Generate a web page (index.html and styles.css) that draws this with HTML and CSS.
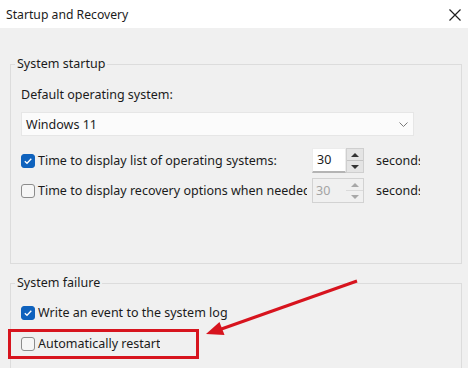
FILE: index.html
```html
<!DOCTYPE html>
<html lang="en">
<head>
<meta charset="utf-8">
<title>Startup and Recovery</title>
<link rel="stylesheet" href="styles.css">
</head>
<body>
<div class="window">
  <div class="titlebar">
    <span class="title">Startup and Recovery</span>
    <svg class="close" width="12" height="12" viewBox="0 0 12 12"><path d="M0.5 0.5 L11.5 11.5 M11.5 0.5 L0.5 11.5" stroke="#1f1f1f" stroke-width="1.2" fill="none"/></svg>
  </div>
  <div class="content">
    <fieldset class="group startup">
      <legend>System startup</legend>
      <div class="field-label">Default operating system:</div>
      <div class="combo">
        <span>Windows 11</span>
        <svg class="chevron" width="9" height="5" viewBox="0 0 9 5"><path d="M0.5 0.5 L4.5 4.5 L8.5 0.5" stroke="#7a7a7a" stroke-width="1" fill="none"/></svg>
      </div>
      <div class="row row-first">
        <div class="check-item">
          <span class="cb checked"><svg width="10" height="10" viewBox="0 0 10 10"><path d="M1.8 5.2 L4 7.3 L8.3 2.8" stroke="#fff" stroke-width="1.3" fill="none"/></svg></span>
          <span class="check-text">Time to display list of operating systems:</span>
        </div>
        <div class="spin">
          <span class="spin-value">30</span>
          <span class="spin-buttons">
            <span class="arrow up"></span>
            <span class="arrow down"></span>
          </span>
        </div>
        <span class="unit">seconds</span>
      </div>
      <div class="row row-second">
        <div class="check-item">
          <span class="cb"></span>
          <span class="check-text">Time to display recovery options when needed</span>
        </div>
        <div class="spin disabled">
          <span class="spin-value">30</span>
          <span class="spin-buttons">
            <span class="arrow up"></span>
            <span class="arrow down"></span>
          </span>
        </div>
        <span class="unit">seconds</span>
      </div>
    </fieldset>
    <fieldset class="group failure">
      <legend>System failure</legend>
      <div class="row row-check">
        <div class="check-item">
          <span class="cb checked"><svg width="10" height="10" viewBox="0 0 10 10"><path d="M1.8 5.2 L4 7.3 L8.3 2.8" stroke="#fff" stroke-width="1.3" fill="none"/></svg></span>
          <span class="check-text">Write an event to the system log</span>
        </div>
      </div>
      <div class="row row-check row-restart">
        <div class="check-item">
          <span class="cb"></span>
          <span class="check-text">Automatically restart</span>
        </div>
      </div>
    </fieldset>
  </div>
  <svg class="annotation" width="468" height="368" viewBox="0 0 468 368">
    <rect x="9.5" y="330.5" width="188" height="27" fill="none" stroke="#d7141e" stroke-width="3"/>
    <line x1="357" y1="281" x2="220" y2="329.5" stroke="#d7141e" stroke-width="3"/>
    <polygon points="206,334 224.5,335 219.5,322" fill="#d7141e"/>
  </svg>
</div>
</body>
</html>
```
FILE: styles.css
```css
html, body {
  margin: 0;
  padding: 0;
}
body {
  width: 468px;
  height: 368px;
  overflow: hidden;
  background: #f0f0f0;
  font-family: "Noto Sans", "Open Sans", sans-serif;
  font-size: 12.5px;
  color: #1b1b1b;
}
.window {
  position: relative;
  width: 468px;
  height: 368px;
  overflow: hidden;
}
.titlebar {
  height: 28px;
  background: #ffffff;
  display: flex;
  align-items: center;
  justify-content: space-between;
  padding: 0 7px 0 6px;
  box-sizing: border-box;
}
.title {
  font-size: 12.2px;
  line-height: 18px;
  margin-top: 1px;
}
.close {
  display: block;
  margin-top: 1px;
}
.content {
  padding: 27px 6px 0 10px;
}
.group {
  margin: 0;
  border: 1px solid #dcdcdc;
  padding: 13px 10px 0 10px;
  min-width: 0;
}
.group legend {
  padding: 0 2px;
  margin-left: -6px;
  line-height: 18px;
}
.startup {
  padding-bottom: 60px;
}
.failure {
  margin-top: 10px;
  padding-top: 10px;
  padding-bottom: 20px;
}
.field-label {
  line-height: 18px;
}
.combo {
  margin-top: 8px;
  width: 393px;
  height: 24px;
  box-sizing: border-box;
  background: #fbfbfb;
  border: 1px solid #e6e6e6;
  display: flex;
  align-items: center;
  justify-content: space-between;
  padding: 0 5px 0 4px;
}
.chevron {
  display: block;
}
.row {
  display: flex;
  align-items: center;
  height: 25px;
}
.row-first {
  margin-top: 12px;
}
.row-second {
  margin-top: 5px;
}
.row-check {
  height: 22px;
}
.row-restart {
  margin-top: 9px;
}
.check-item {
  display: flex;
  align-items: center;
  width: 291px;
  overflow: hidden;
  white-space: nowrap;
  flex: none;
}
.row-second .check-item {
  width: 286px;
  margin-right: 5px;
}
.row-check .check-item {
  width: auto;
}
.cb {
  flex: none;
  width: 14px;
  height: 14px;
  box-sizing: border-box;
  border: 1px solid #8c8c8c;
  border-radius: 3px;
  background: #f6f6f6;
  display: flex;
  align-items: center;
  justify-content: center;
  margin-right: 3px;
}
.cb.checked {
  background: #0f62bd;
  border-color: #0f62bd;
}
.cb svg {
  display: block;
}
.check-text {
  line-height: 18px;
}
.spin {
  flex: none;
  display: flex;
  width: 52px;
  height: 25px;
  box-sizing: border-box;
}
.spin-value {
  width: 34px;
  box-sizing: border-box;
  background: #ffffff;
  border: 1px solid #ececec;
  border-bottom: 2px solid #b4b4b4;
  padding-left: 4px;
  line-height: 21px;
}
.spin-buttons {
  width: 18px;
  box-sizing: border-box;
  display: flex;
  flex-direction: column;
  background: #e4e4e4;
  border: 1px solid #cfcfcf;
}
.arrow {
  flex: 1;
  display: flex;
  align-items: center;
  justify-content: center;
}
.arrow.up {
  border-bottom: 1px solid #c4c4c4;
}
.arrow.up::before {
  content: "";
  border-left: 4px solid transparent;
  border-right: 4px solid transparent;
  border-bottom: 4px solid #333;
}
.arrow.down::before {
  content: "";
  border-left: 4px solid transparent;
  border-right: 4px solid transparent;
  border-top: 4px solid #333;
}
.spin.disabled {
  border: 1px solid #d2d2d2;
  background: #f0f0f0;
}
.spin.disabled .spin-value {
  width: 33px;
  background: #f0f0f0;
  border: none;
  color: #a3a3a3;
  line-height: 23px;
  padding-left: 3px;
}
.spin.disabled .spin-buttons {
  width: 17px;
  background: #f0f0f0;
  border: none;
}
.spin.disabled .arrow.up {
  border-bottom: 1px solid #dadada;
}
.spin.disabled .arrow.up::before {
  border-bottom-color: #a8a8a8;
}
.spin.disabled .arrow.down::before {
  border-top-color: #a8a8a8;
}
.unit {
  margin-left: 12px;
  width: 44px;
  overflow: hidden;
  white-space: nowrap;
  line-height: 18px;
}
.annotation {
  position: absolute;
  left: 0;
  top: 0;
  pointer-events: none;
}
```
